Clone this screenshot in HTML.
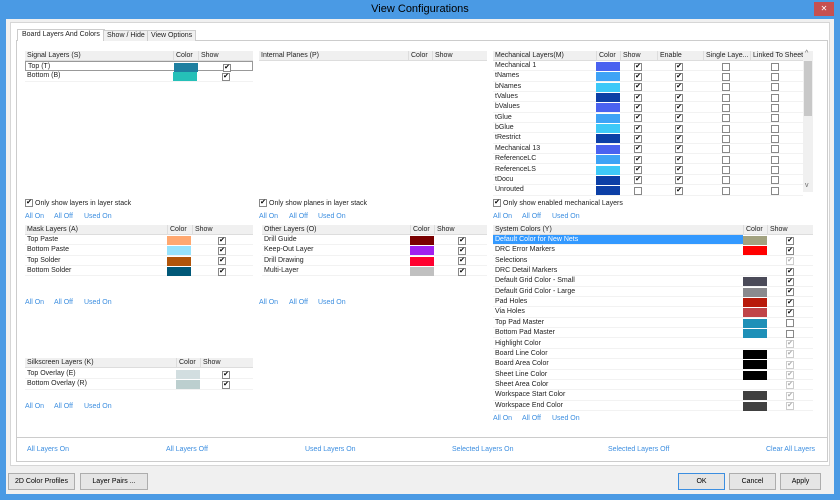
<!DOCTYPE html>
<html><head><meta charset="utf-8"><style>
*{box-sizing:border-box;margin:0;padding:0}
body{width:840px;height:500px;overflow:hidden;background:#4a9ae4;font-family:"Liberation Sans",sans-serif;font-size:7px;color:#222;position:relative;white-space:nowrap}
.a{position:absolute}
.title{left:0;top:0;width:840px;height:19px;text-align:center;font-size:11px;line-height:19px;color:#000}
.close{left:814px;top:2px;width:20px;height:14px;background:#c75050;color:#fff;font-size:8px;text-align:center;line-height:14px}
.body{left:6px;top:19px;width:828px;height:475px;background:#f0f0f0}
.panel{left:10px;top:22px;width:820px;height:444px;background:#fff;border:1px solid #d6d6d6}
.tabc{left:16px;top:40px;width:812px;height:422px;border:1px solid #ccc;background:#fff}
.tab{top:30px;height:11px;border:1px solid #ccc;border-bottom:none;background:#f0f0f0;font-size:7px;line-height:10px;padding:0 3px}
.hd{position:absolute;height:10px;background:#f0f0f0;border-bottom:1px solid #ddd;line-height:10px}
.hd span{position:absolute;top:0;padding-left:2px;border-left:1px solid #ddd;height:10px}
.r{position:absolute;height:10.35px;line-height:10px;border-bottom:1px solid #f2f2f2}
.r .n{position:absolute;left:2px;top:0}
.sw{position:absolute;top:1px;height:9px}
.cb{position:absolute;top:1.5px;width:8px;height:8px;border:1px solid #888;background:#fff;font-size:7px;line-height:6px;text-align:center;color:#000}
.cb.d{border-color:#ccc;color:#aaa}
.lk{position:absolute;color:#3c8ee0;font-size:7px}
.btn{position:absolute;top:473px;height:17px;border:1px solid #adadad;background:#e5e5e5;font-size:7px;text-align:center;line-height:15px;color:#000}
</style></head><body>
<div class="a title">View Configurations</div>
<div class="a close">✕</div>
<div class="a body"></div>
<div class="a panel"></div>
<div class="a tabc"></div>
<div class="a tab" style="left:17px;top:29px;height:12px;background:#fff;padding:0 4px">Board Layers And Colors</div>
<div class="a tab" style="left:103px">Show / Hide</div>
<div class="a tab" style="left:147px">View Options</div>

<div class="hd" style="left:25px;top:51px;width:228px"><span style="left:0;border:none">Signal Layers (S)</span><span style="left:148px">Color</span><span style="left:173px">Show</span></div>
<div class="r" style="left:25px;top:61px;width:228px;border:1px solid #999"><span class="n">Top (T)</span><div class="sw" style="left:148px;width:24px;background:#1e7fa0"></div><div class="cb" style="left:197px">✔</div></div>
<div class="r" style="left:25px;top:71.4px;width:228px"><span class="n">Bottom (B)</span><div class="sw" style="left:148px;width:24px;background:#25c0b8"></div><div class="cb" style="left:197px">✔</div></div>

<div class="hd" style="left:259px;top:51px;width:228px"><span style="left:0;border:none">Internal Planes (P)</span><span style="left:149px">Color</span><span style="left:173px">Show</span></div>

<div class="hd" style="left:493px;top:51px;width:310px"><span style="left:0;border:none">Mechanical Layers(M)</span><span style="left:103px">Color</span><span style="left:127px">Show</span><span style="left:164px">Enable</span><span style="left:210px">Single Laye...</span><span style="left:257px">Linked To Sheet</span></div>
<div class="a" style="left:803px;top:51px;width:10px;height:141px;background:#f0f0f0"></div>
<div class="a" style="left:804px;top:61px;width:8px;height:55px;background:#c8c8c8"></div>
<div class="a" style="left:805px;top:50px;font-size:7px;color:#666">^</div>
<div class="a" style="left:805px;top:182px;font-size:7px;color:#666">v</div>
<div id="mech"></div>

<div class="cb" style="left:25px;top:199px">✔</div><div class="a" style="left:35px;top:200px">Only show layers in layer stack</div>
<div class="lk" style="left:25px;top:213px">All On</div><div class="lk" style="left:54px;top:213px">All Off</div><div class="lk" style="left:84px;top:213px">Used On</div>
<div class="cb" style="left:259px;top:199px">✔</div><div class="a" style="left:269px;top:200px">Only show planes in layer stack</div>
<div class="lk" style="left:259px;top:213px">All On</div><div class="lk" style="left:289px;top:213px">All Off</div><div class="lk" style="left:318px;top:213px">Used On</div>
<div class="cb" style="left:493px;top:199px">✔</div><div class="a" style="left:503px;top:200px">Only show enabled mechanical Layers</div>
<div class="lk" style="left:493px;top:213px">All On</div><div class="lk" style="left:522px;top:213px">All Off</div><div class="lk" style="left:552px;top:213px">Used On</div>

<div class="hd" style="left:25px;top:225px;width:228px"><span style="left:0;border:none">Mask Layers (A)</span><span style="left:142px">Color</span><span style="left:167px">Show</span></div>
<div id="mask"></div>
<div class="lk" style="left:25px;top:299px">All On</div><div class="lk" style="left:54px;top:299px">All Off</div><div class="lk" style="left:84px;top:299px">Used On</div>

<div class="hd" style="left:262px;top:225px;width:225px"><span style="left:0;border:none">Other Layers (O)</span><span style="left:148px">Color</span><span style="left:172px">Show</span></div>
<div id="other"></div>
<div class="lk" style="left:259px;top:299px">All On</div><div class="lk" style="left:289px;top:299px">All Off</div><div class="lk" style="left:318px;top:299px">Used On</div>

<div class="hd" style="left:25px;top:358px;width:228px"><span style="left:0;border:none">Silkscreen Layers (K)</span><span style="left:151px">Color</span><span style="left:175px">Show</span></div>
<div id="silk"></div>
<div class="lk" style="left:25px;top:403px">All On</div><div class="lk" style="left:54px;top:403px">All Off</div><div class="lk" style="left:84px;top:403px">Used On</div>

<div class="hd" style="left:493px;top:225px;width:320px"><span style="left:0;border:none">System Colors (Y)</span><span style="left:250px">Color</span><span style="left:274px">Show</span></div>
<div id="sys"></div>
<div class="lk" style="left:493px;top:415px">All On</div><div class="lk" style="left:522px;top:415px">All Off</div><div class="lk" style="left:552px;top:415px">Used On</div>

<div class="a" style="left:17px;top:437px;width:810px;height:1px;background:#ccc"></div>
<div class="lk" style="left:27px;top:446px">All Layers On</div>
<div class="lk" style="left:166px;top:446px">All Layers Off</div>
<div class="lk" style="left:305px;top:446px">Used Layers On</div>
<div class="lk" style="left:452px;top:446px">Selected Layers On</div>
<div class="lk" style="left:608px;top:446px">Selected Layers Off</div>
<div class="lk" style="left:766px;top:446px">Clear All Layers</div>

<div class="btn" style="left:8px;width:67px">2D Color Profiles</div>
<div class="btn" style="left:80px;width:68px">Layer Pairs ...</div>
<div class="btn" style="left:678px;width:47px;border-color:#3c8ee0">OK</div>
<div class="btn" style="left:729px;width:47px">Cancel</div>
<div class="btn" style="left:780px;width:41px">Apply</div>

<script>
function cb(x,s){return s==0?'<div class="cb" style="left:'+x+'px"></div>':'<div class="cb'+(s==2?' d':'')+'" style="left:'+x+'px">✔</div>'}
function rows(id,x,y,w,cx,cw,items,extra){var h='';items.forEach(function(it,i){var st='left:'+x+'px;top:'+(y+i*10.35)+'px;width:'+w+'px;';if(it.sel){st+='background:#3399ff;';}h+='<div class="r" style="'+st+'"><span class="n"'+(it.sel?' style="color:#fff;"':'')+'>'+it.n+'</span>'+(it.c?'<div class="sw" style="left:'+cx+'px;width:'+cw+'px;background:'+it.c+'"></div>':'')+extra(it)+'</div>';});document.getElementById(id).innerHTML=h;}
var m=[["Mechanical 1","#4a62f0"],["tNames","#3ea3f6"],["bNames","#3ec9f8"],["tValues","#0c3fa6"],["bValues","#4a62f0"],["tGlue","#3ea3f6"],["bGlue","#3ec9f8"],["tRestrict","#0c3fa6"],["Mechanical 13","#4a62f0"],["ReferenceLC","#3ea3f6"],["ReferenceLS","#3ec9f8"],["tDocu","#0c3fa6"],["Unrouted","#0c3fa6"]];
rows('mech',493,61,310,103,24,m.map(function(a,i){return{n:a[0],c:a[1],u:i==12}}),function(it){return cb(141,it.u?0:1)+cb(182,1)+cb(229,0)+cb(278,0)});
rows('mask',25,235,228,142,24,[{n:"Top Paste",c:"#ffa870"},{n:"Bottom Paste",c:"#96e2fc"},{n:"Top Solder",c:"#b0540a"},{n:"Bottom Solder",c:"#005878"}],function(){return cb(193,1)});
rows('other',262,235,225,148,24,[{n:"Drill Guide",c:"#7a0000"},{n:"Keep-Out Layer",c:"#a020f0"},{n:"Drill Drawing",c:"#ff0030"},{n:"Multi-Layer",c:"#c0c0c0"}],function(){return cb(196,1)});
rows('silk',25,369,228,151,24,[{n:"Top Overlay (E)",c:"#d2dee0"},{n:"Bottom Overlay (R)",c:"#bccfcf"}],function(){return cb(197,1)});
var s=[["Default Color for New Nets","#a2a280",1],["DRC Error Markers","#ff0000",1],["Selections","",2],["DRC Detail Markers","",1],["Default Grid Color - Small","#4a4a58",1],["Default Grid Color - Large","#8a8a8e",1],["Pad Holes","#b81a0a",1],["Via Holes","#c04448",1],["Top Pad Master","#1e90b8",0],["Bottom Pad Master","#1e90b8",0],["Highlight Color","",2],["Board Line Color","#000",2],["Board Area Color","#000",2],["Sheet Line Color","#000",2],["Sheet Area Color","",2],["Workspace Start Color","#404040",2],["Workspace End Color","#404040",2]];
rows('sys',493,235,320,250,24,s.map(function(a,i){return{n:a[0],c:a[1],s:a[2],sel:i==0}}),function(it){return cb(293,it.s)});
var f=document.querySelector('#sys .r');f.style.width='250px';
f.innerHTML='<span class="n" style="color:#fff">Default Color for New Nets</span><div class="sw" style="left:250px;width:24px;background:#a2a280"></div>'+cb(293,1);
</script>
</body></html>
